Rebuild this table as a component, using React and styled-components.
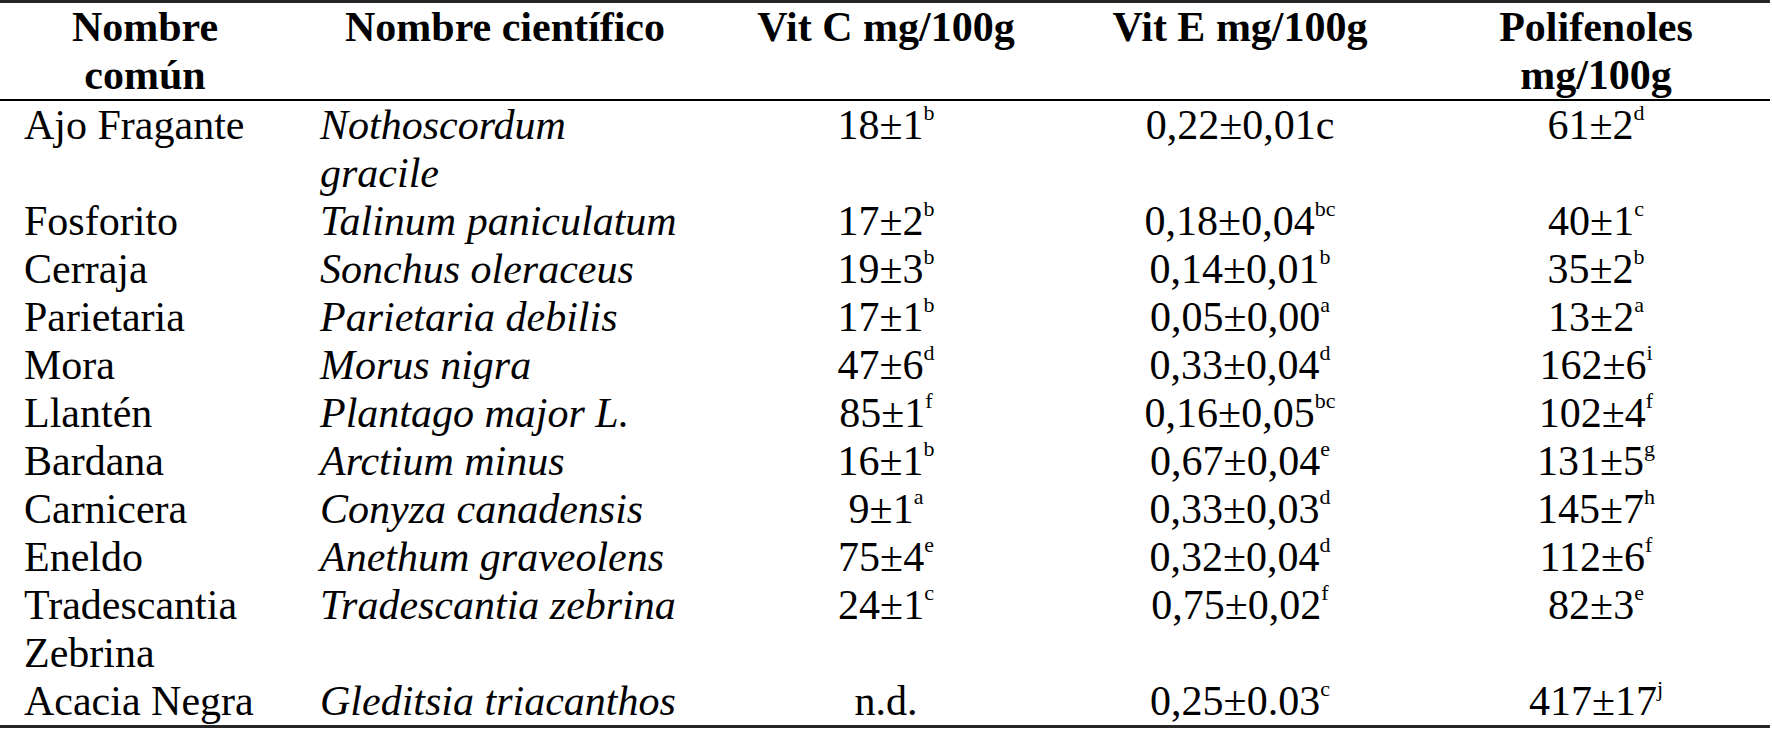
import React from "react";
import styled, { createGlobalStyle } from "styled-components";

const GlobalStyle = createGlobalStyle`
  html, body {
    margin: 0;
    padding: 0;
    background: #ffffff;
  }
  body {
    font-family: "Liberation Serif", "Times New Roman", serif;
    color: #000000;
  }
`;

const Table = styled.table`
  width: 1770px;
  border-collapse: separate;
  border-spacing: 0;
  table-layout: fixed;
  border-top: 3px solid #262626;
  border-bottom: 3px solid #262626;
  font-family: "Liberation Serif", "Times New Roman", serif;
  font-size: 42px;
  line-height: 48px;
`;

const Col = styled.col`
  width: ${(p) => p.$w}px;
`;

const HeadCell = styled.th`
  font-weight: 700;
  text-align: center;
  vertical-align: top;
  padding: 0 24px 0 ${(p) => p.$pl || 24}px;
  border-bottom: 2px solid #000000;
`;

const Cell = styled.td`
  vertical-align: top;
  padding: 0 24px 0 ${(p) => p.$pl || 24}px;
  text-align: ${(p) => p.$align || "left"};
  font-style: ${(p) => (p.$italic ? "italic" : "normal")};
  white-space: normal;
`;

const Sup = styled.span`
  font-size: 22px;
  line-height: 0;
  vertical-align: 19px;
`;

const Value = ({ v }) => (
  <>
    {v[0]}
    {v[1] ? <Sup>{v[1]}</Sup> : null}
  </>
);

const rows = [
  { common: "Ajo Fragante", sci: "Nothoscordum gracile", c: ["18±1", "b"], e: ["0,22±0,01c", ""], p: ["61±2", "d"] },
  { common: "Fosforito", sci: "Talinum paniculatum", c: ["17±2", "b"], e: ["0,18±0,04", "bc"], p: ["40±1", "c"] },
  { common: "Cerraja", sci: "Sonchus oleraceus", c: ["19±3", "b"], e: ["0,14±0,01", "b"], p: ["35±2", "b"] },
  { common: "Parietaria", sci: "Parietaria debilis", c: ["17±1", "b"], e: ["0,05±0,00", "a"], p: ["13±2", "a"] },
  { common: "Mora", sci: "Morus nigra", c: ["47±6", "d"], e: ["0,33±0,04", "d"], p: ["162±6", "i"] },
  { common: "Llantén", sci: "Plantago major L.", c: ["85±1", "f"], e: ["0,16±0,05", "bc"], p: ["102±4", "f"] },
  { common: "Bardana", sci: "Arctium minus", c: ["16±1", "b"], e: ["0,67±0,04", "e"], p: ["131±5", "g"] },
  { common: "Carnicera", sci: "Conyza canadensis", c: ["9±1", "a"], e: ["0,33±0,03", "d"], p: ["145±7", "h"] },
  { common: "Eneldo", sci: "Anethum graveolens", c: ["75±4", "e"], e: ["0,32±0,04", "d"], p: ["112±6", "f"] },
  { common: "Tradescantia Zebrina", sci: "Tradescantia zebrina", c: ["24±1", "c"], e: ["0,75±0,02", "f"], p: ["82±3", "e"] },
  { common: "Acacia Negra", sci: "Gleditsia triacanthos", c: ["n.d.", ""], e: ["0,25±0.03", "c"], p: ["417±17", "j"] },
];

export default function App() {
  return (
    <>
      <GlobalStyle />
      <Table>
        <colgroup>
          <Col $w={290} />
          <Col $w={424} />
          <Col $w={344} />
          <Col $w={364} />
          <Col $w={348} />
        </colgroup>
        <thead>
          <tr>
            <HeadCell>Nombre común</HeadCell>
            <HeadCell $pl={30}>Nombre científico</HeadCell>
            <HeadCell>Vit C mg/100g</HeadCell>
            <HeadCell>Vit E mg/100g</HeadCell>
            <HeadCell>Polifenoles mg/100g</HeadCell>
          </tr>
        </thead>
        <tbody>
          {rows.map((r) => (
            <tr key={r.common}>
              <Cell>{r.common}</Cell>
              <Cell $pl={30} $italic>
                {r.sci}
              </Cell>
              <Cell $align="center">
                <Value v={r.c} />
              </Cell>
              <Cell $align="center">
                <Value v={r.e} />
              </Cell>
              <Cell $align="center">
                <Value v={r.p} />
              </Cell>
            </tr>
          ))}
        </tbody>
      </Table>
    </>
  );
}
